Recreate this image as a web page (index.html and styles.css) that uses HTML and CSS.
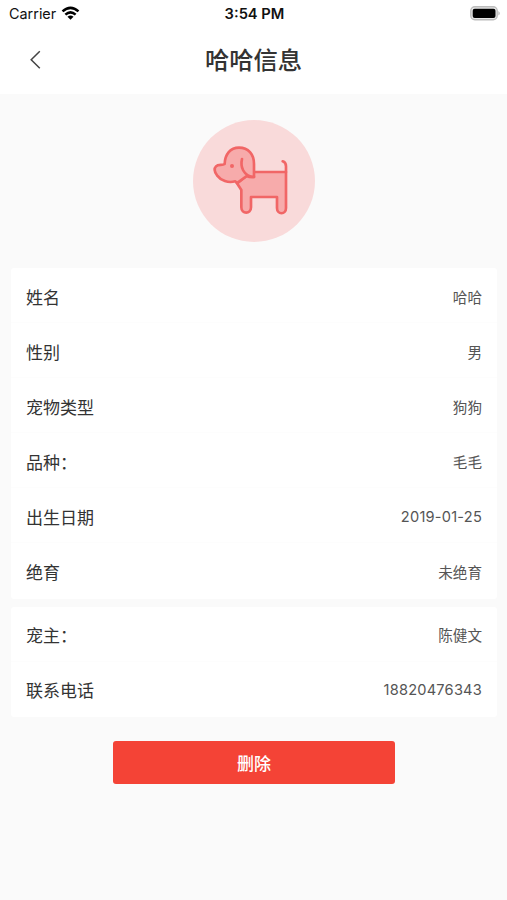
FILE: index.html
```html
<!DOCTYPE html>
<html lang="zh-CN">
<head>
    <meta charset="UTF-8">
    <meta name="viewport" content="width=device-width, initial-scale=1.0">
    <title>哈哈信息</title>
    <link rel="stylesheet" href="styles.css">
</head>
<body>
    <header class="header">
        <div class="status-bar">
            <div class="carrier">
                <span>Carrier</span>
                <svg class="wifi" width="19" height="15" viewBox="0 0 20 15">
                    <g fill="none" stroke="#000" stroke-width="2.7">
                        <path d="M1.6 5.3 Q10 -2.1 18.4 5.3"/>
                        <path d="M4.6 8.7 Q10 4 15.4 8.7"/>
                    </g>
                    <path d="M6.8 10.9 Q10 8.2 13.2 10.9 L10 14.2Z"/>
                </svg>
            </div>
            <div class="time">3:54 PM</div>
            <svg class="battery" width="31" height="15" viewBox="0 0 31 15">
                <rect x="0.8" y="0.8" width="26.4" height="13" rx="4" fill="#e8e8e8" stroke="#bcbcbc" stroke-width="1.4"/>
                <rect x="2.7" y="2.7" width="22.8" height="9.2" rx="2"/>
                <path d="M28.5 5 Q30.8 7.3 28.5 9.6Z" fill="#a5a5a5"/>
            </svg>
        </div>
        <div class="nav-bar">
            <svg class="back" width="12" height="20" viewBox="0 0 12 20">
                <path d="M10.8 1.2 L2.2 9.7 L10.8 18.2" fill="none" stroke="#444" stroke-width="1.5"/>
            </svg>
            <h1>哈哈信息</h1>
        </div>
    </header>

    <main>
        <svg class="avatar" width="122" height="122" viewBox="0 0 366 366">
            <circle cx="183" cy="183" r="183" fill="#f9dada"/>
            <g fill="#f7abab" stroke="#f16666" stroke-width="8" stroke-linecap="round" stroke-linejoin="round">
                <!-- body and legs -->
                <path d="M181 156 H279 V264 C279 285 252 285 252 264 V231 H174 V262 C174 283 145 283 145 262 V210 L132 190 L161 168Z"/>
                <!-- tail -->
                <path d="M279 156 V139 Q279 127 269 124" fill="none"/>
                <!-- head -->
                <path d="M95 132 C96 103 112 83 138 83 C166 83 183 103 183 132 V171 Q170 172 161 168 L132 189 L127 184 C105 190 84 182 72 166 C65 156 62 146 69 139 C76 132 88 137 95 132Z"/>
                <!-- ear -->
                <path d="M147 117 C142 138 149 168 183 171" fill="none"/>
            </g>
            <circle cx="117" cy="138" r="6" fill="#f16666"/>
        </svg>

        <section class="card">
            <div class="row"><span class="label">姓名</span><span class="value">哈哈</span></div>
            <div class="row"><span class="label">性别</span><span class="value">男</span></div>
            <div class="row"><span class="label">宠物类型</span><span class="value">狗狗</span></div>
            <div class="row"><span class="label">品种：</span><span class="value">毛毛</span></div>
            <div class="row"><span class="label">出生日期</span><span class="value number">2019-01-25</span></div>
            <div class="row"><span class="label">绝育</span><span class="value">未绝育</span></div>
        </section>

        <section class="card">
            <div class="row"><span class="label">宠主：</span><span class="value">陈健文</span></div>
            <div class="row"><span class="label">联系电话</span><span class="value number">18820476343</span></div>
        </section>

        <button class="delete">删除</button>
    </main>
</body>
</html>
```
FILE: styles.css
```css
* {
    margin: 0;
    padding: 0;
    box-sizing: border-box;
}

body {
    font-family: Inter, "Noto Sans CJK SC", sans-serif;
    min-height: 100vh;
    background: #fafafa;
    color: #333;
}

.header {
    height: 94px;
    background: #fff;
}

.status-bar {
    display: grid;
    grid-template-columns: 1fr auto 1fr;
    align-items: center;
    height: 27px;
    padding: 0 6px 0 8px;
    color: #111;
}

.carrier {
    display: flex;
    align-items: center;
    gap: 5px;
    padding-left: 1px;
    font-size: 14.4px;
}

.time {
    font-size: 14.7px;
    font-weight: 600;
}

.battery {
    justify-self: end;
}

.nav-bar {
    display: grid;
    grid-template-columns: 1fr auto 1fr;
    align-items: center;
    height: 66px;
    padding: 0 29px;
}

.nav-bar h1 {
    font-size: 24.3px;
    font-weight: 500;
    line-height: 36px;
}

main {
    display: flex;
    flex-direction: column;
    align-items: center;
    padding: 0 10px 0 11px;
}

.avatar {
    margin: 26px 0;
}

.card {
    width: 100%;
    margin-bottom: 8px;
    background: #fff;
    border-radius: 3px;
}

.row {
    display: flex;
    justify-content: space-between;
    align-items: center;
    height: 55.1px;
    padding: 2px 15px 0;
    border-bottom: 1px solid #fdfdfd;
}

.row:last-child {
    padding-top: 0;
    border-bottom: none;
}

.label {
    font-size: 17px;
}

.value {
    font-size: 14.6px;
    color: #555;
}

.number {
    padding-top: 1px;
    letter-spacing: 0.22px;
}

.delete {
    width: 282px;
    height: 43px;
    margin-top: 16px;
    border: none;
    border-radius: 3px;
    background: #f44336;
    color: #fff;
    font-family: inherit;
    font-size: 17px;
    font-weight: 500;
}
```
